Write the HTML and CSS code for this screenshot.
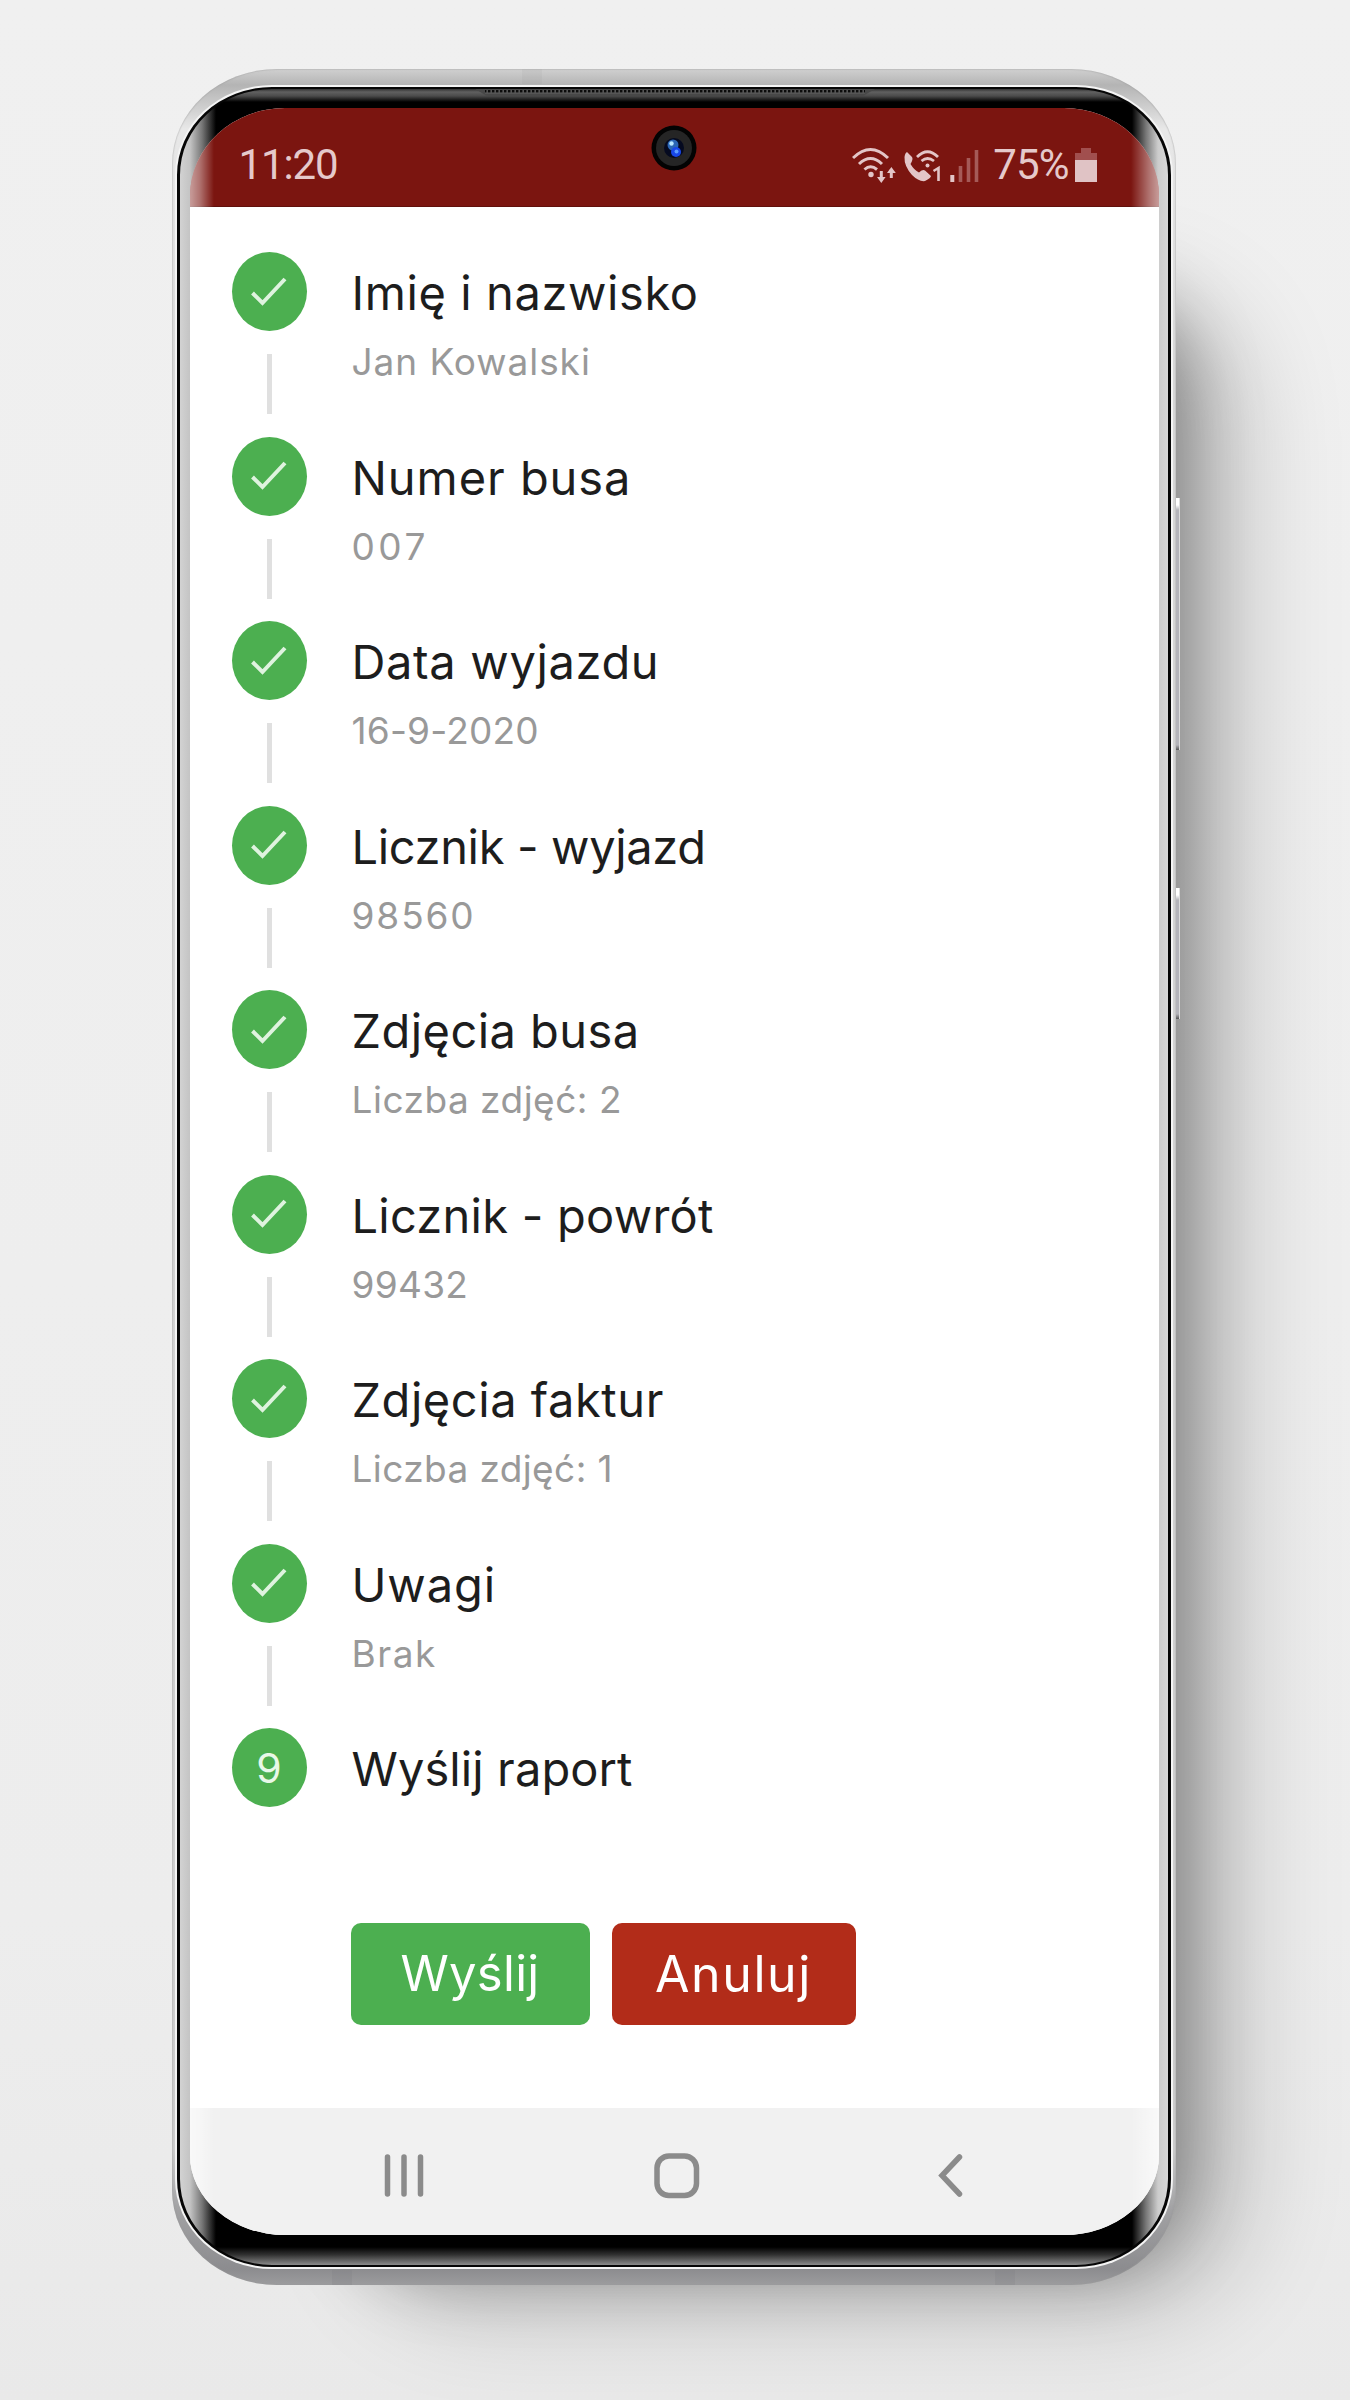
FILE: index.html
```html
<!DOCTYPE html>
<html lang="pl">
<head>
<meta charset="utf-8">
<title>Raport</title>
<link rel="stylesheet" href="styles.css">
</head>
<body>
<main class="stage">
  <div class="cast-shadow"></div>
  <div class="phone">
    <span class="side-key side-key-volume"></span>
    <span class="side-key side-key-power"></span>
    <span class="antenna antenna-top"></span>
    <span class="antenna antenna-bottom-left"></span>
    <span class="antenna antenna-bottom-right"></span>
    <div class="rim">
    <div class="bezel">
      <svg class="speaker" width="400" height="8" viewBox="0 0 400 8">
        <defs><pattern id="mesh" width="4" height="4" patternUnits="userSpaceOnUse"><rect width="4" height="4" fill="#555"/><rect x="1" y="1" width="2.4" height="2.4" fill="#0c0c0c"/></pattern></defs>
        <path d="M0 0H400L388 7H12Z" fill="#484848"/><path d="M10 1H390V5H10Z" fill="url(#mesh)"/>
      </svg>
      <div class="screen">
        <header class="status">
          <span class="clock">11:20</span>
          <svg class="status-icons" width="130" height="40" viewBox="0 0 130 40" fill="none" stroke="#e3c5c7" stroke-width="3">
            <path d="M1 13Q18.500 -4 36 13M7 19Q18.500 8 30 19M12.500 24.500Q18.500 19 25 24.500"/>
            <circle cx="19" cy="29.500" r="2.700" fill="#e3c5c7" stroke="none"/>
            <path d="M29.300 26V34M39.300 24V33" stroke-width="3"/>
            <path d="M25 32H33.600L29.300 38ZM35 28H43.800L39.400 22Z" fill="#e3c5c7" stroke="none"/>
            <path d="M55 7L60 12Q61.500 14 58.500 19Q62 25 67 27.500Q71 24 73 25.500L79 31Q79 33 73 36Q67 37 60 30Q52 21 52.500 12Q53 8 55 7Z" fill="#e3c5c7" stroke="none"/>
            <path d="M65 12Q75.500 1.500 86 12M69.500 16Q75.500 11 82 16" stroke-width="2.800"/>
            <circle cx="75.500" cy="20.500" r="2" fill="#e3c5c7" stroke="none"/>
            <path d="M81.500 26L86.500 23V36" stroke-width="2.600"/>
            <path d="M100.300 30V37" stroke-width="4"/>
            <path d="M108.500 21V37M116.500 13V37M124.500 5V37" stroke="#a55a58" stroke-width="3.600"/>
          </svg>
          <span class="battery-level">75%</span>
          <svg class="battery" width="22" height="34" viewBox="0 0 22 34"><path d="M6 0H16V5H22V13H0V5H6Z" fill="#a14f4e"/><path d="M0 12H22V34H0Z" fill="#e0c3c5"/></svg>
          <svg class="camera" width="46" height="46" viewBox="0 0 46 46"><circle cx="23" cy="23" r="22.500" fill="#030303"/><circle cx="23" cy="23" r="18" fill="#252525"/><circle cx="23" cy="23" r="10" fill="#050a20"/><circle cx="22" cy="20" r="5.500" fill="#2b66b5"/><circle cx="25" cy="27" r="5" fill="#1847e8"/><circle cx="20.500" cy="18.500" r="2.200" fill="#b9e8ff"/><circle cx="25.500" cy="26.500" r="2" fill="#5c9dff"/></svg>
        </header>
        <section class="content">
          <ol class="steps">
            <li class="step"><div class="track"><span class="badge"><svg class="check" viewBox="0 0 36 30"><path d="M1.500 16L11.500 26L34 2"/></svg></span><i class="line"></i></div><div class="info"><h2 class="t1">Imię i nazwisko</h2><p class="s1">Jan Kowalski</p></div></li>
            <li class="step"><div class="track"><span class="badge"><svg class="check" viewBox="0 0 36 30"><path d="M1.500 16L11.500 26L34 2"/></svg></span><i class="line"></i></div><div class="info"><h2 class="t2">Numer busa</h2><p class="s2">007</p></div></li>
            <li class="step"><div class="track"><span class="badge"><svg class="check" viewBox="0 0 36 30"><path d="M1.500 16L11.500 26L34 2"/></svg></span><i class="line"></i></div><div class="info"><h2 class="t3">Data wyjazdu</h2><p class="s3">16-9-2020</p></div></li>
            <li class="step"><div class="track"><span class="badge"><svg class="check" viewBox="0 0 36 30"><path d="M1.500 16L11.500 26L34 2"/></svg></span><i class="line"></i></div><div class="info"><h2 class="t4">Licznik - wyjazd</h2><p class="s4">98560</p></div></li>
            <li class="step"><div class="track"><span class="badge"><svg class="check" viewBox="0 0 36 30"><path d="M1.500 16L11.500 26L34 2"/></svg></span><i class="line"></i></div><div class="info"><h2 class="t5">Zdjęcia busa</h2><p class="s5">Liczba zdjęć: 2</p></div></li>
            <li class="step"><div class="track"><span class="badge"><svg class="check" viewBox="0 0 36 30"><path d="M1.500 16L11.500 26L34 2"/></svg></span><i class="line"></i></div><div class="info"><h2 class="t6">Licznik - powrót</h2><p class="s6">99432</p></div></li>
            <li class="step"><div class="track"><span class="badge"><svg class="check" viewBox="0 0 36 30"><path d="M1.500 16L11.500 26L34 2"/></svg></span><i class="line"></i></div><div class="info"><h2 class="t7">Zdjęcia faktur</h2><p class="s7">Liczba zdjęć: 1</p></div></li>
            <li class="step"><div class="track"><span class="badge"><svg class="check" viewBox="0 0 36 30"><path d="M1.500 16L11.500 26L34 2"/></svg></span><i class="line"></i></div><div class="info"><h2 class="t8">Uwagi</h2><p class="s8">Brak</p></div></li>
            <li class="step"><div class="track"><span class="badge">9</span></div><div class="info"><h2 class="t9">Wyślij raport</h2></div></li>
          </ol>
          <div class="actions"><button class="btn send">Wyślij</button><button class="btn cancel">Anuluj</button></div>
        </section>
        <nav class="navbar">
          <svg width="40" height="44" viewBox="0 0 40 44"><path d="M3.500 3V40M20 3V40M36.500 3V40"/></svg>
          <svg class="home" width="46" height="46" viewBox="0 0 46 46"><rect x="3" y="3" width="39.500" height="39.500" rx="12"/></svg>
          <svg width="28" height="46" viewBox="0 0 28 46"><path d="M22.500 4L5 22.500L22.500 41"/></svg>
        </nav>
      </div>
    </div>
    </div>
  </div>
</main>
</body>
</html>
```
FILE: styles.css
```css
* { box-sizing: border-box; }
body { margin: 0; font-family: Inter, "Noto Sans", sans-serif; }
.stage { position: relative; width: 1350px; height: 2400px; padding: 69px 0 0 172px; overflow: hidden; background: linear-gradient(180deg, #f0f0f0, #ededed 80%, #e9e9e9); }
.cast-shadow { position: absolute; left: 350px; top: 290px; width: 805px; height: 1940px; border-radius: 80px; box-shadow: 12px 20px 70px 20px #0000005c, 50px 40px 100px 40px #0000002e; }
.phone { position: relative; width: 1004px; height: 2216px; padding: 16px 3px 16px; border-radius: 105px / 95px; background: linear-gradient(180deg, #d0d0d0 0, #b4b4b4 16px, #e8e8e8 60px, #d8d8d8 300px, #ccc 2080px, #a2a2a4 2140px, #8c8c8f 2200px, #9c9c9e 2216px); box-shadow: inset 0 0 1px 1px #9995; }
.rim { height: 100%; padding: 2px; border-radius: 97px / 90px; background: #f4f4f4; }
.bezel { position: relative; height: 100%; padding: 18.500px 15px 32px 14px; border-radius: 95px / 88px; border: 2px solid #060606; border-width: 2px 3px; background: linear-gradient(90deg, #d2d2d2 0, #c4c4c4 10px, #777 22px, transparent 36px, transparent calc(100% - 36px), #777 calc(100% - 22px), #ccc calc(100% - 10px), #d8d8d8 100%), linear-gradient(180deg, #333 0, #606060 3px, #4b4b4b 7px, #000 13px, #000 calc(100% - 18px), #333 calc(100% - 10px), #8b8b8b 100%); }
.speaker { position: absolute; left: 295px; top: 0; }
.screen { position: relative; width: 969px; height: 2127px; margin-left: -4.500px; display: flex; flex-direction: column; border-radius: 95px 95px 95px 95px / 88px 88px 80px 80px; overflow: hidden; background: #fff; }
.screen::after { content: ""; position: absolute; inset: 0; pointer-events: none; background: linear-gradient(90deg, #ffffff94 0, #ffffff65 10px, #fff0 24px, #fff0 calc(100% - 28px), #ffffff65 calc(100% - 10px), #ffffff94 100%); }
.status { position: relative; flex: none; height: 99px; padding: 16px 62px 0 49px; display: flex; align-items: center; background: #7b1510; border-bottom: 1px solid #61100c; color: #e5c9cb; font: 42px/60px Roboto, sans-serif; letter-spacing: -0.9px; }
.clock { flex: 1; letter-spacing: -1.1px; }
.status-icons { margin: 0 11px 0 0; }
.battery { margin: 0 0 0 6px; }
.camera { position: absolute; left: 461px; top: 17px; }
.content { flex: 1; padding: 45.500px 0 0 42px; }
.steps { list-style: none; margin: 0; padding: 0; }
.step { display: flex; height: 184.500px; gap: 45px; }
.track { width: 75px; display: flex; flex-direction: column; align-items: center; }
.badge { width: 75px; height: 79px; border-radius: 50%; background: #4caf50; color: #e8f8e8; display: flex; align-items: center; justify-content: center; font-size: 41px; }
.check { width: 36px; height: 30px; fill: none; stroke: #dff3df; stroke-width: 4; }
.line { width: 5px; height: 60px; margin-top: 23px; background: #e0e0e0; }
h2 { margin: 11px 0 0; font-size: 47px; line-height: 60px; font-weight: 400; color: #1d1d1d; white-space: nowrap; }
p { margin: 14px 0 0; font-size: 37px; line-height: 50px; color: #999; white-space: nowrap; }
.t1 { letter-spacing: 0.6px; }
.t2 { letter-spacing: 0.95px; }
.t3 { letter-spacing: 0.65px; }
.t4 { letter-spacing: -0.35px; }
.t5 { letter-spacing: 0.45px; }
.t6 { letter-spacing: 0.25px; }
.t7 { letter-spacing: 0.55px; }
.t8 { letter-spacing: 0.9px; }
.t9 { letter-spacing: 0.1px; }
.s1 { letter-spacing: 0.95px; }
.s2 { letter-spacing: 3.5px; }
.s3 { letter-spacing: 0.2px; }
.s4 { letter-spacing: 1.9px; }
.s5 { letter-spacing: 0.5px; }
.s6 { letter-spacing: 0.3px; }
.s7 { letter-spacing: 0.4px; }
.s8 { letter-spacing: 1.5px; }
.actions { display: flex; gap: 22px; padding: 10px 0 0 119px; }
.btn { height: 102px; border: 0; border-radius: 10px; padding: 0; color: #fff; font: 400 49px Inter, sans-serif; }
.send { width: 239px; background: #4caf50; letter-spacing: 0.3px; }
.cancel { width: 244px; background: #b22c19; font-size: 50px; letter-spacing: 1.6px; }
.navbar { flex: none; height: 127px; padding: 9px 194px 0 194px; display: flex; justify-content: space-between; align-items: center; background: #f1f1f1; }
.navbar svg { fill: none; stroke: #8b8b8b; stroke-width: 5.500; stroke-linecap: round; }
.navbar .home { margin-right: 7px; }
.side-key { position: absolute; right: -4px; width: 4px; background: linear-gradient(#fff 0, #fff 7px, #b4b4ba 12px, #b4b4ba calc(100% - 5px), #555 100%); border-right: 1px solid #ddd; }
.side-key-volume { top: 429px; height: 252px; }
.side-key-power { top: 819px; height: 131px; }
.antenna { position: absolute; width: 20px; height: 15px; background: #77777b2b; }
.antenna-top { left: 350px; top: 0; background: #88888818; }
.antenna-bottom-left { left: 160px; bottom: 0; }
.antenna-bottom-right { right: 161px; bottom: 0; }
```
